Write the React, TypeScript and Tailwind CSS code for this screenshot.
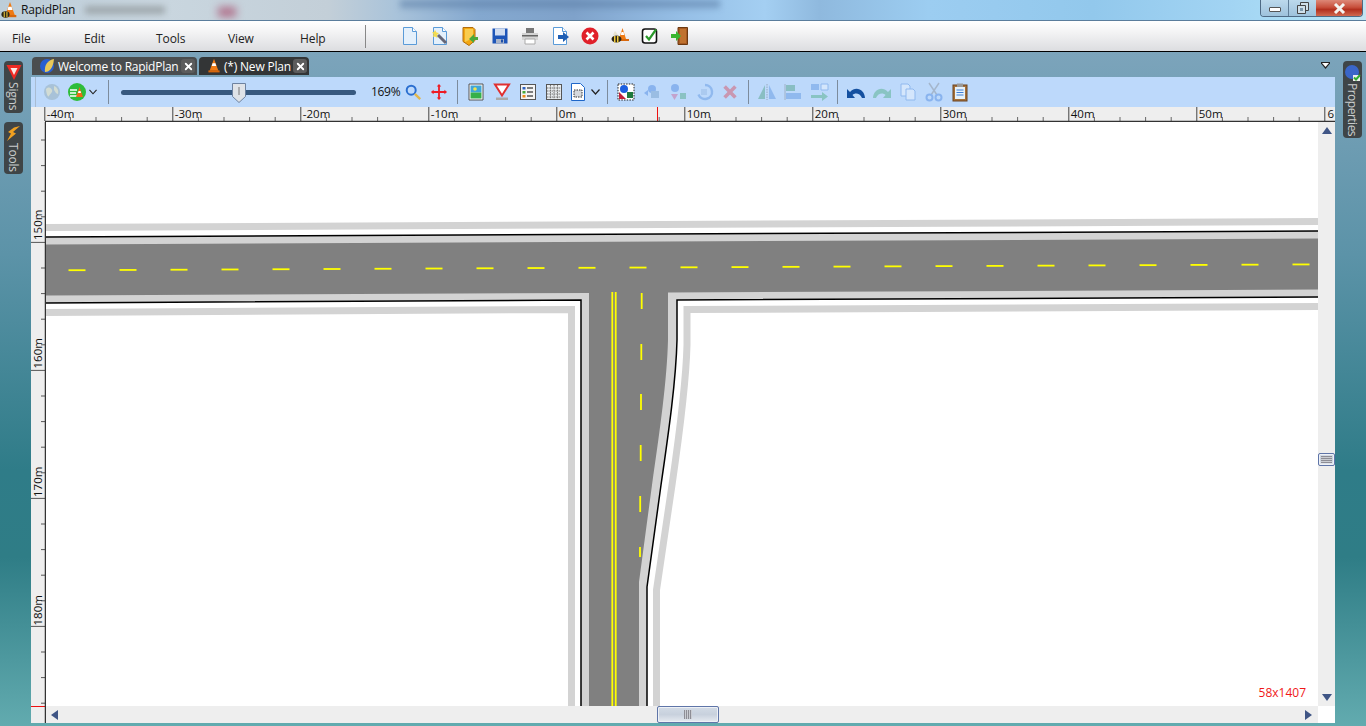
import type { ReactNode } from "react";
import { X } from "lucide-react";

const Ico = ({ children, size = 20 }: { children: ReactNode; size?: number }) => (
  <svg width={size} height={size} viewBox="0 0 20 20">
    {children}
  </svg>
);

const Cone = () => (
  <>
    <path d="M10 1 15.500 16h-11z" fill="#ef7a14" />
    <path d="M8.200 6.500h3.600l1 3.500H7.200z" fill="#fff" />
    <path d="M3 15.500h14V18H3z" fill="#d8670c" />
  </>
);

const Page = ({ fill = "#e4f0fb" }: { fill?: string }) => (
  <>
    <path d="M3.500 1.500h9l4 4v13h-13z" fill={fill} stroke="#5a9bd8" />
    <path d="M12.500 1.500v4h4" fill="#fff" stroke="#5a9bd8" />
  </>
);

const Chevron = () => (
  <svg width="9" height="6" viewBox="0 0 9 6">
    <path d="M.5.5 4.500 5 8.500.5" fill="none" stroke="#222" strokeWidth="1.200" />
  </svg>
);

const mainIcons: ReactNode[] = [
  <Ico key="new">
    <Page />
  </Ico>,
  <Ico key="wand">
    <Page />
    <path d="m5 4 1.500 2.500L9 7 7 9l.5 3-2.500-1.500L3 11l.5-3L2 6.500 4 6z" fill="#f4dc50" />
    <path d="m8 9 8 8" stroke="#667" strokeWidth="3" />
  </Ico>,
  <Ico key="open">
    <path d="M3 1.500h10l2 2v11l-6 5-6-4z" fill="#f3a712" stroke="#b26d0c" />
    <path d="M5 3h8v9l-8 4z" fill="#f9cc4e" />
    <path d="m9 13 5-5v3h4v3h-4v3z" fill="#4aa83a" />
  </Ico>,
  <Ico key="save">
    <path d="M2.500 2.500h15v15h-15z" fill="#1d55b8" />
    <path d="M5 2.500h10v7H5z" fill="#cfdcf0" />
    <path d="M6 13h8v4.500H6z" fill="#a9b4c8" />
    <path d="M11 13.500h2v3h-2z" fill="#1d4fa8" />
  </Ico>,
  <Ico key="print">
    <path d="M6 2h8v5H6z" fill="#777" />
    <path d="M2 7h16v7H2z" fill="#d4d4d4" />
    <path d="M2 9h16v1.500H2z" fill="#666" />
    <path d="M5 13h10v5H5z" fill="#fff" stroke="#aaa" />
  </Ico>,
  <Ico key="export">
    <Page fill="#fff" />
    <path d="M8 9h5V6l6 5-6 5v-3H8z" fill="#1f5fb4" />
  </Ico>,
  <Ico key="stop">
    <circle cx="10" cy="10" r="8.500" fill="#e0202a" />
    <path d="m6.500 6.500 7 7m0-7-7 7" stroke="#fff" strokeWidth="2.600" />
  </Ico>,
  <Ico key="bee">
    <path d="M12.500 2 16 13H9z" fill="#ef7a14" />
    <path d="M11.500 6h2l.8 3h-3.600z" fill="#fff" />
    <path d="M8 13h11v2H8z" fill="#d8670c" />
    <ellipse cx="6.500" cy="13" rx="5" ry="3.500" fill="#2a2417" />
    <path d="M4 10h1.500v6.500H4zM7 10h1.500v6.500H7z" fill="#efc93a" />
    <path d="M3 9 5 5l3 4z" fill="#e8e2d0" />
  </Ico>,
  <Ico key="check">
    <rect x="2.500" y="3" width="14" height="14" rx="2.500" fill="#fff" stroke="#111" strokeWidth="1.600" />
    <path d="m6 10 3 3.500L16 3.500" fill="none" stroke="#2b9a2b" strokeWidth="2.200" />
  </Ico>,
  <Ico key="exit">
    <path d="M8 1.500h9.500v17H8z" fill="#a65a22" stroke="#6d3910" />
    <path d="M10 3h6v14h-6z" fill="#c0722f" />
    <path d="M1 8h5V5l5 5-5 5v-3H1z" fill="#38b52f" />
  </Ico>,
];

const ToolBtn = ({ children, w = "w-[26px]", className = "" }: { children: ReactNode; w?: string; className?: string }) => (
  <div className={`flex shrink-0 items-center justify-center ${w} ${className}`}>{children}</div>
);

const Sep = ({ ml }: { ml: string }) => <div className={`h-[24px] w-px shrink-0 bg-[#7c8b9c] ${ml}`} />;

const fade = "opacity-35";

const Toolbar = () => (
  <div className="flex h-[30px] shrink-0 items-center bg-[#bdd9fb] text-[#111]">
    <div className="h-full w-[5px] shrink-0 border-r border-[#a9bcd2]" />
    <div className="ml-[3px]" />
    <ToolBtn>
      <Ico>
        <circle cx="10" cy="10" r="8" fill="#a8c2d8" />
        <path d="M4 7c3-3 5-1 6 1s-2 4-3 6-3-3-3-7zM12 4c3 1 5 4 4 8-2 0-3-3-4-4z" fill="#d2dcd4" />
      </Ico>
    </ToolBtn>
    <ToolBtn w="w-[24px]">
      <Ico>
        <circle cx="10" cy="10" r="9" fill="#2fbd3a" />
        <path d="M3 8h7M3 11h6M3 14h7" stroke="#fff" strokeWidth="1.600" />
        <path d="M12.500 5 16 15H9z" fill="#ef6a14" />
        <path d="M11.500 9h2l.5 2h-3z" fill="#fff" />
      </Ico>
    </ToolBtn>
    <ToolBtn w="w-[8px]">
      <Chevron />
    </ToolBtn>
    <Sep ml="ml-[11px]" />
    <div className="relative ml-[12px] flex h-full w-[235px] shrink-0 items-center">
      <div className="h-[5px] w-full rounded-full bg-[#37597f]" />
      <svg className="absolute left-[111px] top-[6px]" width="14" height="20" viewBox="0 0 14 20">
        <path d="M.5.5h13v13L7 19.500.5 13.500z" fill="#dfe3e8" stroke="#6d82a0" />
        <path d="M7 4v8" stroke="#777" />
      </svg>
    </div>
    <div className="ml-[15px] w-[30px] shrink-0 text-[12px] tracking-[-0.3px]">169%</div>
    <ToolBtn w="w-[24px]">
      <Ico size={18}>
        <circle cx="8" cy="8" r="5" fill="none" stroke="#2b6fd0" strokeWidth="2.200" />
        <path d="m12 12 6 6" stroke="#e2b64a" strokeWidth="2.600" />
      </Ico>
    </ToolBtn>
    <ToolBtn className="ml-px">
      <Ico size={18}>
        <path d="M10 3v14M3 10h14" stroke="#ee1c25" strokeWidth="2" />
        <path d="m10 1 2.500 3h-5zM10 19l2.500-3h-5zM1 10l3-2.500v5zM19 10l-3-2.500v5z" fill="#ee1c25" />
      </Ico>
    </ToolBtn>
    <Sep ml="ml-[5px]" />
    <ToolBtn className="ml-[5px]">
      <Ico>
        <path d="M3 2h14v16H3z" fill="#fff" stroke="#555" />
        <path d="M4.500 3.500h11v7h-11z" fill="#3fa6d8" />
        <path d="M4.500 10.500h11v6h-11z" fill="#35b04a" />
        <circle cx="9" cy="7" r="1.800" fill="#f2e54b" />
      </Ico>
    </ToolBtn>
    <ToolBtn>
      <Ico>
        <path d="M3 2.500h14l-7 11z" fill="#fff" stroke="#e03030" strokeWidth="2" />
        <path d="M4 15.500h12V18H4z" fill="#aaa" />
      </Ico>
    </ToolBtn>
    <ToolBtn>
      <Ico>
        <rect x="2.500" y="2.500" width="15" height="15" fill="#f4f4f4" stroke="#555" />
        <path d="M4.500 5h3v2.500h-3z" fill="#2f62c0" />
        <path d="M4.500 9h3v2.500h-3z" fill="#46a83a" />
        <path d="M4.500 13h3v2.500h-3z" fill="#ef8a14" />
        <path d="M9 6h6M9 10h6M9 14h6" stroke="#555" strokeWidth="1.300" />
      </Ico>
    </ToolBtn>
    <ToolBtn>
      <Ico>
        <rect x="2.500" y="2.500" width="15" height="15" fill="#e8ecef" stroke="#555" />
        <path d="M3 6h14M3 9h14M3 12h14M3 15h14M6.500 3v14M10 3v14M13.500 3v14" stroke="#777" strokeDasharray="1.500 .8" />
      </Ico>
    </ToolBtn>
    <ToolBtn w="w-[22px]">
      <Ico>
        <path d="M3.500 1.500h9l4 4v13h-13z" fill="#fff" stroke="#1e66c8" />
        <rect x="6" y="8" width="8" height="7" fill="#d6d9dd" stroke="#333" strokeDasharray="1.500 1" />
      </Ico>
    </ToolBtn>
    <ToolBtn w="w-[12px]">
      <Chevron />
    </ToolBtn>
    <Sep ml="ml-[6px]" />
    <ToolBtn className="ml-[5px]">
      <Ico>
        <rect x="2" y="2" width="16" height="16" fill="#fff" stroke="#222" strokeDasharray="1.500 1.200" />
        <circle cx="8" cy="7" r="4" fill="#1c5fe0" />
        <path d="M3 17V10l7 7z" fill="#c0203c" />
        <path d="M11 10h6v6h-6z" fill="#1e7a3c" />
      </Ico>
    </ToolBtn>
    <ToolBtn className={fade}>
      <Ico>
        <circle cx="10" cy="7" r="4" fill="#2a6fd8" />
        <path d="M9 9h8v7H9z" fill="#5a8ab8" />
        <path d="m2 11 4-3v6z" fill="#2a6fd8" />
      </Ico>
    </ToolBtn>
    <ToolBtn className={fade}>
      <Ico>
        <circle cx="7" cy="6" r="4" fill="#2a6fd8" />
        <path d="M3 12h7l-3.500 6z" fill="#d0407a" />
        <path d="M12 11h6v6h-6z" fill="#2e9a5c" />
      </Ico>
    </ToolBtn>
    <ToolBtn className={fade}>
      <Ico>
        <path d="M11 3a7 7 0 1 1-6.500 9.500" fill="none" stroke="#3f7fd8" strokeWidth="2.500" />
        <path d="M7 7h6v6H7z" fill="#8ab0dc" />
      </Ico>
    </ToolBtn>
    <ToolBtn className={fade}>
      <Ico size={18}>
        <path d="m4 4 12 12m0-12L4 16" stroke="#e0202a" strokeWidth="4" />
      </Ico>
    </ToolBtn>
    <Sep ml="ml-[5px]" />
    <ToolBtn className={`ml-[5px] ${fade}`}>
      <Ico>
        <path d="M8 3v14H1z" fill="#2b8f5e" />
        <path d="M12 3v14h7z" fill="#3f7fd8" />
        <path d="M10 2v16" stroke="#555" strokeDasharray="1.500 1" />
      </Ico>
    </ToolBtn>
    <ToolBtn className={fade}>
      <Ico>
        <path d="M2 2v16" stroke="#666" />
        <path d="M3 3h9v6H3z" fill="#2b8f5e" />
        <path d="M3 11h15v6H3z" fill="#3f7fd8" />
      </Ico>
    </ToolBtn>
    <ToolBtn className={fade}>
      <Ico>
        <path d="M2 2h8v6H2z" fill="#3f7fd8" />
        <path d="M12 2h7v6h-7z" fill="#fff" stroke="#3f7fd8" />
        <path d="M2 13h11v-3l6 4.500-6 4.500v-3H2z" fill="#2b9f5e" />
      </Ico>
    </ToolBtn>
    <Sep ml="ml-[5px]" />
    <ToolBtn className="ml-[5px]">
      <Ico>
        <path d="M1 7v9h8l-2.500-3C9 10.500 14 11 16 16h3C19 8 10 3 4 10z" fill="#1450a0" />
      </Ico>
    </ToolBtn>
    <ToolBtn className={fade}>
      <Ico>
        <path d="M19 7v9h-8l2.500-3C11 10.500 6 11 4 16H1C1 8 10 3 16 10z" fill="#2a9f5e" />
      </Ico>
    </ToolBtn>
    <ToolBtn className={fade}>
      <Ico>
        <path d="M3 2h7l2 2v10H3z" fill="#fff" stroke="#3f7fd8" />
        <path d="M8 7h7l2 2v9H8z" fill="#fff" stroke="#3f7fd8" />
      </Ico>
    </ToolBtn>
    <ToolBtn className={fade}>
      <Ico>
        <path d="m5 1 8 12m2-12L7 13" stroke="#777" strokeWidth="1.500" />
        <circle cx="5.500" cy="15.500" r="3" fill="none" stroke="#2a6fd8" strokeWidth="2" />
        <circle cx="14.500" cy="15.500" r="3" fill="none" stroke="#2a6fd8" strokeWidth="2" />
      </Ico>
    </ToolBtn>
    <ToolBtn>
      <Ico>
        <rect x="3" y="3" width="14" height="16" fill="#a5703a" stroke="#6d4520" />
        <path d="M5 5h10v12H5z" fill="#e6f2fb" />
        <path d="M7 1.500h6V5H7z" fill="#999" />
        <path d="M6.500 8h7M6.500 10.500h7M6.500 13h7" stroke="#3f7fd8" />
      </Ico>
    </ToolBtn>
  </div>
);

const rulerStep = 25.6;
const ticksX = Array.from({ length: 52 }, (_, i) => 44.8 + i * rulerStep);
const labelsX = [-40, -30, -20, -10, 0, 10, 20, 30, 40, 50];
const ticksY = Array.from({ length: 24 }, (_, i) => 140 + i * rulerStep);

const TopRuler = () => (
  <svg className="block shrink-0" width="1304" height="15" viewBox="31 107 1304 15">
    <rect x="31" y="107" width="1304" height="15" fill="#eeeeee" />
    {ticksX.map((x, i) => (
      <path key={i} d={`M${x} ${i % 5 === 0 ? 107 : 117}V121`} stroke={i % 5 === 0 ? "#444" : "#666"} strokeWidth="1" />
    ))}
    {labelsX.map((m) => (
      <text key={m} x={556.8 + m * 12.8 + 2} y="117.500" fontSize="11.500" fill="#111" fontFamily="'Open Sans',sans-serif">
        {m}m
      </text>
    ))}
    <text x="1327.500" y="117.500" fontSize="11.500" fill="#111" fontFamily="'Open Sans',sans-serif">
      6
    </text>
    <path d="M657.500 107V121" stroke="#ee1111" />
    <path d="M45 121.500H1335" stroke="#333" strokeWidth="1.500" />
  </svg>
);

const LeftRuler = () => (
  <svg className="block shrink-0" width="15" height="601" viewBox="31 122 15 601">
    <rect x="31" y="122" width="15" height="601" fill="#eeeeee" />
    {ticksY.map((y, i) => (
      <path key={i} d={`M${(i - 4) % 5 === 0 ? 31 : 41} ${y}H45`} stroke="#555" />
    ))}
    {[150, 160, 170, 180].map((m, i) => (
      <text
        key={m}
        transform={`translate(42 ${240 + i * 128.500}) rotate(-90)`}
        fontSize="11.500"
        fill="#111"
        fontFamily="'Open Sans',sans-serif"
      >
        {m}m
      </text>
    ))}
    <path d="M31 706.500H45" stroke="#ee1111" />
    <path d="M45.500 122V723" stroke="#333" strokeWidth="1.500" />
  </svg>
);

const Road = () => {
  const dashes = Array.from({ length: 25 }, (_, i) => 68.5 + i * 51);
  const vDashes: [number, number, number][] = [
    [293, 309, 641.7],
    [344, 360, 641.3],
    [394, 410, 641],
    [445, 461, 640.7],
    [496, 512, 640.2],
    [547, 557, 640],
  ];
  return (
    <svg className="block" width="1272" height="584" viewBox="46 122 1272 584">
      <rect x="46" y="122" width="1272" height="584" fill="#fff" />
      <g fill="none" stroke="#d3d3d3" strokeWidth="7">
        <path d="M46 227.500 1318 221.500" />
        <path d="M46 312.500 571.500 309.500V706" />
        <path d="M1318 306.500 687 309.500V345C686 385 680 430 672 485L656.500 590V706" />
      </g>
      <path
        d="M46 237 1318 231V297L677 300V340C676 380 669 430 661 485L647 587V706H581V300L46 303Z"
        fill="#d3d3d3"
      />
      <path
        d="M46 244.500 1318 238.500V289.500L668 292.500V340C667 380 660 430 652 485L639 582V706H589V293L46 295.500Z"
        fill="#808080"
      />
      <g fill="none" stroke="#000" strokeWidth="1.500">
        <path d="M46 237 1318 231" />
        <path d="M46 303 581 300V706" />
        <path d="M1318 297 677 300V340C676 380 669 430 661 485L647 587V706" />
      </g>
      <g stroke="#ffff00" strokeWidth="1.800">
        <path d="M612.300 292V706M615.700 292V706" />
        {dashes.map((x) => {
          const y = 270.3 - (x - 46) * 0.0047;
          return <path key={x} d={`M${x} ${y}h17`} />;
        })}
        {vDashes.map(([a, b, x]) => (
          <path key={a} d={`M${x} ${a}V${b}`} />
        ))}
      </g>
    </svg>
  );
};

const Arrow = ({ d }: { d: string }) => (
  <svg width="12" height="12" viewBox="0 0 12 12">
    <path d={d} fill="#3f5585" />
  </svg>
);

const Thumb = ({ className, grip }: { className: string; grip: string }) => (
  <div
    className={`flex items-center justify-center rounded-[2px] border border-[#5f75a8] bg-[linear-gradient(#d3dbe6,#c8d1dd_50%,#e6eaf0)] shadow-[inset_0_0_0_1px_#eef1f6] ${className}`}
  >
    <div className={grip} />
  </div>
);

const SideTab = ({ label, icon, h, text }: { label: string; icon: ReactNode; h: string; text: string }) => (
  <div className={`flex w-[19px] flex-col items-center rounded-[4px] bg-[#3f4547] pt-[3px] ${h}`}>
    <div className="shrink-0 leading-[0]">{icon}</div>
    <span className={`mt-[1px] text-[12px] leading-[19px] text-[#c9cccc] [writing-mode:vertical-rl] ${text}`}>
      {label}
    </span>
  </div>
);

const TabClose = () => (
  <div className="flex h-[14px] w-[14px] items-center justify-center rounded-[3px] bg-[#5c5c5c]">
    <X size={11} strokeWidth={4} color="#fff" />
  </div>
);

export default function App() {
  return (
    <div className="flex h-[726px] w-[1366px] flex-col overflow-hidden bg-[#5c93a8] font-['Open_Sans',sans-serif]">
      {/* window title */}
      <div className="relative flex h-[21px] shrink-0 items-center overflow-hidden border-b border-[#5a7d9c] bg-[linear-gradient(90deg,#bccdd9_0%,#c9d6df_12%,#c3cfd8_24%,#a9c3da_29%,#84a8cf_35%,#7fa2ca_42%,#96bfe6_50%,#a4cff2_56%,#8fb9de_60%,#9ccdf1_68%,#92c8ec_80%,#a2d4f3_90%,#aee0f6_96%,#c4e4f2_100%)]">
        <div className="absolute left-[85px] top-[6px] h-[8px] w-[80px] bg-[#9fa8ad] blur-[3px]" />
        <div className="absolute left-[218px] top-[7px] h-[10px] w-[18px] bg-[#b0708a] blur-[4px]" />
        <div className="absolute left-[400px] top-0 h-[8px] w-[320px] bg-[#5d80a8] opacity-60 blur-[3px]" />
        <svg className="relative ml-[1px] shrink-0" width="18" height="20" viewBox="0 0 20 20">
          <Cone />
          <ellipse cx="5" cy="15" rx="4.500" ry="3.500" fill="#2a2417" />
          <path d="M3 12h1.200v6H3zM6 12h1.200v6H6z" fill="#efc93a" />
        </svg>
        <span className="relative ml-[2px] text-[12px] tracking-[-0.2px] text-[#111]">RapidPlan</span>
        <div className="absolute right-[3px] top-0 flex h-[17px] overflow-hidden rounded-b-[4px] border border-t-0 border-[#4e6a84]">
          <div className="flex w-[28px] items-center justify-center border-r border-[#5f7d97] bg-[linear-gradient(#bcd9ec,#9ec2dc)]">
            <div className="mt-[2px] h-[5px] w-[12px] rounded-[1px] border border-[#555] bg-white" />
          </div>
          <div className="flex w-[27px] items-center justify-center bg-[linear-gradient(#bcd9ec,#9ec2dc)]">
            <svg width="12" height="12" viewBox="0 0 12 12">
              <path d="M3.500.5h8v8h-8z" fill="#cfdfe9" stroke="#444" />
              <path d="M.5 3.500h8v8h-8z" fill="#cfdfe9" stroke="#444" />
              <path d="M3 6h3v3H3z" fill="#7d98ac" />
            </svg>
          </div>
          <div className="flex w-[46px] items-center justify-center bg-[linear-gradient(#dd8877,#c8503c_45%,#b2301e_60%,#d06a50)]">
            <svg width="13" height="11" viewBox="0 0 13 11">
              <path d="m2 1 9 9m0-9-9 9" stroke="#f4f4f0" strokeWidth="3" />
            </svg>
          </div>
        </div>
      </div>

      {/* menu and main toolbar */}
      <div className="flex h-[31px] shrink-0 items-center border-b border-black bg-[linear-gradient(#ffffff,#f4f4f5_35%,#dcdde0)]">
        {["File", "Edit", "Tools", "View", "Help"].map((m) => (
          <div key={m} className="mt-[6px] w-[72px] shrink-0 pl-[12px] text-[12px] tracking-[-0.1px] text-[#222]">
            {m}
          </div>
        ))}
        <div className="ml-[5px] h-[23px] w-px shrink-0 bg-[#888]" />
        <div className="ml-[29px] flex">
          {mainIcons.map((icon, i) => (
            <div key={i} className="flex w-[30px] shrink-0 items-center justify-center">
              {icon}
            </div>
          ))}
        </div>
      </div>

      {/* body */}
      <div className="flex min-h-0 flex-1 bg-[linear-gradient(#7ca4bb_0%,#5c93a8_30%,#2f7c88_62%,#2f7d86_75%,#62abaf_100%)]">
        <div className="flex w-[31px] shrink-0 flex-col gap-[9px] pl-[4px] pt-[9px]">
          <SideTab
            label="Signs"
            h="h-[52px]"
            text="tracking-[-0.2px]"
            icon={
              <svg width="16" height="17" viewBox="0 0 16 17">
                <path d="M.5 1h15L8 16z" fill="#ee2a24" />
                <path d="M4.500 4h7L8 11z" fill="#fbe8e4" />
              </svg>
            }
          />
          <SideTab
            label="Tools"
            h="h-[52px]"
            text="tracking-[-0.2px]"
            icon={
              <svg width="15" height="17" viewBox="0 0 15 17">
                <path d="M14 1 7 7l3 1.500L1 16l4-7.500L2 7l6-4.500z" fill="#f0a020" />
              </svg>
            }
          />
        </div>

        <div className="flex w-[1304px] shrink-0 flex-col">
          <div className="flex h-[25px] shrink-0 items-start whitespace-nowrap pl-px pt-[5px] text-[12px] text-white">
            <div className="flex h-[18px] w-[165px] items-center rounded-t-[4px] bg-[#4a4d4f] pl-[7px]">
              <svg className="shrink-0" width="18" height="16" viewBox="0 0 18 16">
                <circle cx="8" cy="8" r="7" fill="#2a5fd0" />
                <path d="M15 1C9 2 5 7 6 14c4 0 8-3 9-13z" fill="#e8c85a" />
              </svg>
              <span className="ml-px mt-[2px] tracking-[-0.25px]">Welcome to RapidPlan</span>
              <div className="ml-auto mr-[2px]">
                <TabClose />
              </div>
            </div>
            <div className="ml-[2px] flex h-[18px] w-[110px] items-center rounded-t-[4px] bg-[#333536] pl-[7px]">
              <svg className="shrink-0" width="16" height="16" viewBox="0 0 20 20">
                <Cone />
              </svg>
              <span className="ml-[2px] mt-[2px] tracking-[-0.2px]">(*) New Plan</span>
              <div className="ml-auto mr-[2px]">
                <TabClose />
              </div>
            </div>
            <svg className="ml-auto mr-[5px] mt-[5px]" width="9" height="7" viewBox="0 0 9 7">
              <path d="M0 0h9v1.500L4.500 7 0 1.500z" fill="#222" />
              <path d="M1 1h7L4.500 5z" fill="#fff" />
            </svg>
          </div>

          <Toolbar />
          <TopRuler />

          <div className="flex h-[601px] shrink-0">
            <LeftRuler />
            <div className="flex w-[1289px] flex-col">
              <div className="flex h-[584px] shrink-0">
                <div className="relative w-[1272px] shrink-0">
                  <Road />
                  <span className="absolute bottom-[4px] right-[12px] text-[12px] text-[#f01818]">58x1407</span>
                </div>
                <div className="flex w-[17px] shrink-0 flex-col items-center bg-[#eeeeee] pt-[3px]">
                  <Arrow d="M6 2 11 9H1z" />
                  <Thumb
                    className="mt-[316px] h-[13px] w-[17px]"
                    grip="h-[7px] w-[11px] bg-[repeating-linear-gradient(#8d8d95_0_1px,#c9ccd2_1px_2px)]"
                  />
                  <div className="mt-[226px]">
                    <Arrow d="M1 2h10L6 9z" />
                  </div>
                </div>
              </div>
              <div className="flex h-[17px] shrink-0">
                <div className="flex w-[1272px] shrink-0 items-center bg-[#eeeeee] pl-[3px]">
                  <Arrow d="M9 1v10L2 6z" />
                  <Thumb
                    className="ml-[596px] h-[17px] w-[62px]"
                    grip="h-[9px] w-[8px] bg-[repeating-linear-gradient(90deg,#8d8d95_0_1px,#c9ccd2_1px_2px)]"
                  />
                  <div className="ml-[583px]">
                    <Arrow d="M3 1v10l7-5z" />
                  </div>
                </div>
                <div className="w-[17px] shrink-0 bg-white" />
              </div>
            </div>
          </div>
        </div>

        <div className="flex w-[31px] shrink-0 justify-start pl-[8px] pt-[9px]">
          <SideTab
            label="Properties"
            h="h-[77px]"
            text="tracking-[-0.5px]"
            icon={
              <svg width="17" height="18" viewBox="0 0 17 18">
                <circle cx="8" cy="8" r="7" fill="#3a66c8" />
                <path d="M9 11h7v6H9z" fill="#eee" />
                <path d="m10 13.500 2 2L16 11" fill="none" stroke="#2fae2f" strokeWidth="2" />
              </svg>
            }
          />
        </div>
      </div>
    </div>
  );
}
